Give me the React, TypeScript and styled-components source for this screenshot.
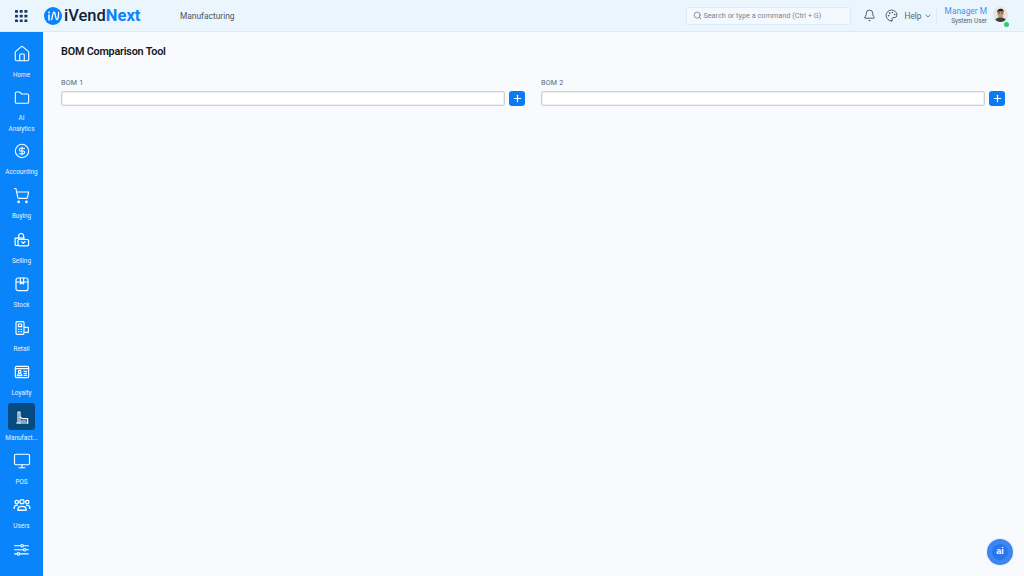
import React from 'react';
import styled, { createGlobalStyle } from 'styled-components';
import { House, Folder, CircleDollarSign, ShoppingCart, Monitor, Bell, Palette, Search, ChevronDown, Plus } from 'lucide-react';

const GlobalStyle = createGlobalStyle`
  html, body { margin: 0; padding: 0; height: 100%; }
  body { font-family: Roboto, "Noto Sans", sans-serif; background: #f8fafd; overflow: hidden; }
  * { box-sizing: border-box; }
`;

const Page = styled.div`
  width: 1024px;
  height: 576px;
  display: flex;
  flex-direction: column;
  position: relative;
`;

const Header = styled.header`
  height: 32px;
  flex: none;
  display: flex;
  align-items: center;
  background: #ebf5fd;
  border-bottom: 1px solid #d9ebfb;
  padding-left: 15px;
  padding-right: 16px;
`;

const Logo = styled.div`
  display: flex;
  align-items: center;
  margin-left: 16px;
  width: 136px;
  gap: 2px;
`;

const LogoText = styled.span`
  font-size: 16.5px;
  font-weight: 500;
  color: #10233a;
  b { color: #0a84fb; font-weight: 700; }
`;

const Crumb = styled.span`
  font-size: 8.4px;
  color: #4a5560;
`;

const SearchBox = styled.div`
  margin-left: auto;
  width: 165px;
  height: 18px;
  display: flex;
  align-items: center;
  gap: 1px;
  padding-left: 6px;
  background: #f3f9fe;
  border: 1px solid #d9ebfb;
  border-radius: 3px;
  font-size: 7.3px;
  color: #7c858e;
  svg { color: #6c757e; }
`;

const HeaderIcon = styled.span`
  display: flex;
  color: #2e3a46;
  margin-left: ${p => p.$gap}px;
`;

const Help = styled.span`
  display: flex;
  align-items: center;
  gap: 2px;
  margin-left: 6px;
  font-size: 8.4px;
  color: #5a646e;
  svg { color: #3c4650; }
`;

const Divider = styled.span`
  width: 1px;
  height: 16px;
  background: #dfeaf4;
  margin-left: 4px;
`;

const UserBlock = styled.div`
  margin-left: 8px;
  display: flex;
  flex-direction: column;
  align-items: flex-end;
  line-height: 9px;
`;

const UserName = styled.span`
  font-size: 8.4px;
  color: #3d94ea;
  line-height: 11px;
`;

const UserRole = styled.span`
  font-size: 6.4px;
  color: #555f69;
`;

const AvatarWrap = styled.div`
  position: relative;
  width: 15px;
  height: 15px;
  margin-left: 6px;
  margin-top: -3px;
`;

const Status = styled.span`
  position: absolute;
  right: -1px;
  bottom: -5px;
  width: 5px;
  height: 5px;
  border-radius: 50%;
  background: #2ecc71;
`;

const Body = styled.div`
  flex: 1;
  display: flex;
  min-height: 0;
`;

const Sidebar = styled.nav`
  width: 43px;
  flex: none;
  background: #0a84fb;
  display: flex;
  flex-direction: column;
  align-items: center;
  padding-top: 8px;
  overflow: hidden;
`;

const NavItem = styled.div`
  width: 43px;
  flex: none;
  display: flex;
  flex-direction: column;
  align-items: center;
  height: ${p => (p.$tall ? 53 : 44.3)}px;
`;

const NavIcon = styled.div`
  width: 27px;
  height: 27px;
  flex: none;
  display: flex;
  align-items: center;
  justify-content: center;
  border-radius: 3px;
  color: #fff;
  background: ${p => (p.$active ? '#064a80' : 'transparent')};
`;

const NavLabel = styled.div`
  flex: 1;
  display: flex;
  align-items: center;
  justify-content: center;
  text-align: center;
  width: 43px;
  padding-bottom: 1px;
  font-size: 6.4px;
  line-height: 11px;
  color: #e6f3ff;
  white-space: pre-line;
`;

const Main = styled.main`
  flex: 1;
  padding: 12px 19px 0 18px;
`;

const Title = styled.h1`
  margin: 0;
  font-size: 10.8px;
  line-height: 15px;
  font-weight: 600;
  letter-spacing: -0.2px;
  color: #14181c;
`;

const Fields = styled.div`
  display: grid;
  grid-template-columns: 1fr 1fr;
  column-gap: 16px;
  margin-top: 19px;
`;

const FieldLabel = styled.div`
  font-size: 7.2px;
  line-height: 10px;
  color: #62676c;
  letter-spacing: 0.2px;
  margin-bottom: 3px;
`;

const FieldRow = styled.div`
  display: flex;
  align-items: center;
  gap: 4px;
`;

const Input = styled.input`
  flex: 1;
  min-width: 0;
  height: 15px;
  padding: 0 4px;
  background: #fff;
  border: 1px solid #cfd2d5;
  border-radius: 2px;
  box-shadow: inset 0 0 0 1px #eceef0;
  outline: none;
`;

const AddButton = styled.button`
  width: 16px;
  height: 15px;
  padding: 0;
  flex: none;
  display: flex;
  align-items: center;
  justify-content: center;
  background: #0a7bf5;
  color: #fff;
  border: none;
  border-radius: 3px;
`;

const AiButton = styled.button`
  position: absolute;
  right: 11px;
  bottom: 11px;
  width: 26px;
  height: 26px;
  padding: 0;
  border: none;
  border-radius: 50%;
  background: #3d86f2;
  box-shadow: 0 0 0 1px #e8f0fc;
  display: flex;
  align-items: center;
  justify-content: center;
`;

const AiInner = styled.span`
  width: 16px;
  height: 16px;
  border-radius: 50%;
  background: #2a75ea;
  color: #fff;
  font-size: 9px;
  font-weight: 700;
  line-height: 15px;
  text-align: center;
`;

const GridIcon = () => (
  <svg width="13" height="12" viewBox="0 0 13 12" fill="#1d3a66">
    {[0, 4.7, 9.4].map(y => [0, 4.7, 9.4].map(x => <rect key={`${x}-${y}`} x={x} y={y} width="3" height="2.8" rx="0.5" />))}
  </svg>
);

const LogoMark = () => (
  <svg width="18" height="18" viewBox="0 0 18 18">
    <circle cx="9" cy="9" r="9" fill="#0a84fb" />
    <path d="M5 8v5" stroke="#fff" strokeWidth="1.5" strokeLinecap="round" fill="none" />
    <circle cx="5" cy="5.500" r="0.9" fill="#fff" />
    <path d="M7.500 12.500c1-1 .8-6.500 2.300-7.300 1.600-.8 1.500 6.800 3 7.300 1.300.3 1.800-4 1.800-7" stroke="#fff" strokeWidth="1.300" strokeLinecap="round" fill="none" />
  </svg>
);

const Line = ({ children, size = 16 }: { children: React.ReactNode; size?: number }) => (
  <svg width={size} height={size} viewBox="0 0 24 24" fill="none" stroke="currentColor" strokeWidth="1.7" strokeLinecap="round" strokeLinejoin="round">
    {children}
  </svg>
);

const SellingIcon = () => (
  <Line size={17}>
    <path d="M8 10V7a3.500 3.500 0 0 1 7 0v3" />
    <path d="M3 10h13M3 10v9a1.500 1.500 0 0 0 1.500 1.500H7" />
    <rect x="7" y="12" width="15" height="9" rx="1.500" />
    <path d="M12 15l2.500 2.500L17 15" />
  </Line>
);

const StockIcon = () => (
  <Line>
    <path d="M6 3h12a3 3 0 0 1 3 3v13a3 3 0 0 1-3 3H6a3 3 0 0 1-3-3V6a3 3 0 0 1 3-3z" />
    <path d="M3 9h18M9.500 3v9l2.500-1.500 2.500 1.500V3" />
  </Line>
);

const RetailIcon = () => (
  <Line>
    <rect x="3" y="2.500" width="12" height="19" rx="1.500" />
    <rect x="6.500" y="6" width="5" height="4" />
    <path d="M6.500 14h1M10.500 14h1M6.500 17.500h1M10.500 17.500h1" />
    <path d="M15 11h6.500v7.500H15" />
  </Line>
);

const LoyaltyIcon = () => (
  <Line>
    <rect x="2" y="3.500" width="20" height="17" rx="2" />
    <path d="M2 7h20" />
    <circle cx="8.500" cy="11.500" r="2" />
    <path d="M5 17.500c.4-4 6.600-4 7 0z" />
    <path d="M15 11h4M15 14h4M15 17h4" />
  </Line>
);

const FactoryIcon = () => (
  <Line>
    <path d="M6 21V4.500h3V21" />
    <path d="M4 21h17" />
    <path d="M9 12l4 2.500h7.500V21" />
    <path d="M11 18h7" />
  </Line>
);

const UsersIcon = () => (
  <Line size={18}>
    <circle cx="12" cy="7.500" r="2.800" />
    <circle cx="5" cy="8" r="2.300" />
    <circle cx="19" cy="8" r="2.300" />
    <path d="M6.500 19v-1.500c0-5 11-5 11 0V19z" />
    <path d="M1.500 16.500c0-3.500 2-4.500 4.500-4.200M22.500 16.500c0-3.500-2-4.500-4.500-4.200" />
  </Line>
);

const SlidersIcon = () => (
  <Line size={15}>
    <path d="M1 6h22M1 12.500h22M1 19h22" />
    <circle cx="13" cy="6" r="2" fill="#0a84fb" />
    <circle cx="17" cy="12.500" r="2" fill="#0a84fb" />
    <circle cx="7" cy="19" r="2" fill="#0a84fb" />
  </Line>
);

const Avatar = () => (
  <svg width="15" height="15" viewBox="0 0 15 15">
    <clipPath id="avatar"><circle cx="7.500" cy="7.500" r="7.500" /></clipPath>
    <g clipPath="url(#avatar)">
      <rect width="15" height="15" fill="#e9e4de" />
      <path d="M1.500 15c.5-3.500 3-4.500 6-4.500s5.500 1 6 4.500z" fill="#3a3f3c" />
      <ellipse cx="7.500" cy="6.500" rx="3" ry="3.800" fill="#c49a7e" />
      <path d="M4.300 5.500C4 2.800 6 1.800 7.800 1.800c2 0 3.300 1.300 3 3.700L10 4.300 5.300 4.400z" fill="#2b211c" />
      <path d="M5.200 8.500c.8 2.500 3.800 2.500 4.600 0l-.6 2H5.800z" fill="#4a372c" />
      <path d="M4.800 6h2.200M8 6h2.200" stroke="#2b211c" strokeWidth="0.7" />
    </g>
  </svg>
);

const navItems = [
  { label: 'Home', icon: <House size={18} strokeWidth={1.5} /> },
  { label: 'AI\nAnalytics', icon: <Folder size={16} strokeWidth={1.6} />, tall: true },
  { label: 'Accounting', icon: <CircleDollarSign size={16} strokeWidth={1.6} /> },
  { label: 'Buying', icon: <ShoppingCart size={17} strokeWidth={1.6} /> },
  { label: 'Selling', icon: <SellingIcon /> },
  { label: 'Stock', icon: <StockIcon /> },
  { label: 'Retail', icon: <RetailIcon /> },
  { label: 'Loyalty', icon: <LoyaltyIcon /> },
  { label: 'Manufact...', icon: <FactoryIcon />, active: true },
  { label: 'POS', icon: <Monitor size={18} strokeWidth={1.5} /> },
  { label: 'Users', icon: <UsersIcon /> },
  { label: '', icon: <SlidersIcon /> },
];

export default function App() {
  return (
    <Page>
      <GlobalStyle />
      <Header>
        <GridIcon />
        <Logo>
          <LogoMark />
          <LogoText>iVend<b>Next</b></LogoText>
        </Logo>
        <Crumb>Manufacturing</Crumb>
        <SearchBox>
          <Search size={9} />
          Search or type a command (Ctrl + G)
        </SearchBox>
        <HeaderIcon $gap={12}><Bell size={13} strokeWidth={1.5} /></HeaderIcon>
        <HeaderIcon $gap={9}><Palette size={13} strokeWidth={1.5} /></HeaderIcon>
        <Help>Help <ChevronDown size={8} /></Help>
        <Divider />
        <UserBlock>
          <UserName>Manager M</UserName>
          <UserRole>System User</UserRole>
        </UserBlock>
        <AvatarWrap>
          <Avatar />
          <Status />
        </AvatarWrap>
      </Header>
      <Body>
        <Sidebar>
          {navItems.map(item => (
            <NavItem key={item.label || 'settings'} $tall={item.tall}>
              <NavIcon $active={item.active}>{item.icon}</NavIcon>
              <NavLabel>{item.label}</NavLabel>
            </NavItem>
          ))}
        </Sidebar>
        <Main>
          <Title>BOM Comparison Tool</Title>
          <Fields>
            {['BOM 1', 'BOM 2'].map(name => (
              <div key={name}>
                <FieldLabel>{name}</FieldLabel>
                <FieldRow>
                  <Input />
                  <AddButton><Plus size={11} strokeWidth={2.5} /></AddButton>
                </FieldRow>
              </div>
            ))}
          </Fields>
        </Main>
      </Body>
      <AiButton><AiInner>ai</AiInner></AiButton>
    </Page>
  );
}
